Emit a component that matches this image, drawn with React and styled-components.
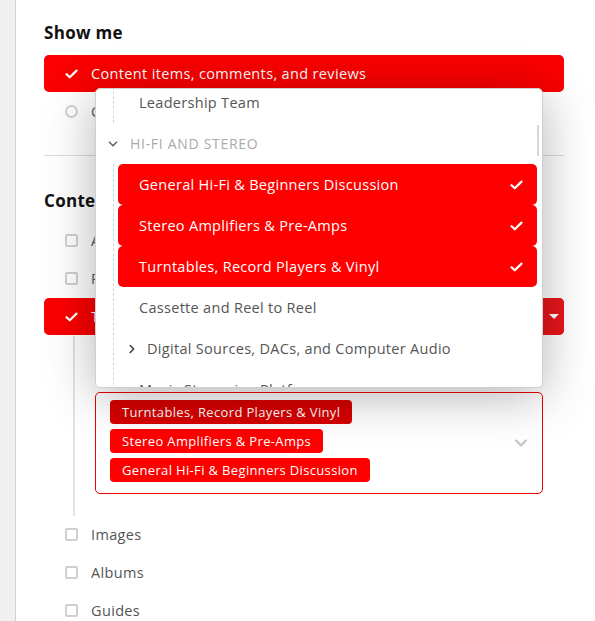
import styled, { createGlobalStyle } from 'styled-components';

const GlobalStyle = createGlobalStyle`
  body {
    margin: 0;
    background: #ffffff;
    font-family: 'Open Sans', 'Liberation Sans', sans-serif;
  }
`;

const Page = styled.div`
  display: flex;
  min-height: 621px;
  overflow: hidden;
`;

const Sidebar = styled.div`
  width: 15px;
  flex-shrink: 0;
  background: #f0f0f0;
  border-right: 1px solid #d2d2d2;
`;

const Main = styled.div`
  flex: 1;
  padding: 22px 31px 0 28px;
`;

const Section = styled.div`
  padding-bottom: ${p => (p.divided ? '24px' : '0')};
  border-bottom: ${p => (p.divided ? '1px solid #dcdcdc' : 'none')};
  margin-bottom: ${p => (p.divided ? '34px' : '0')};
`;

const Heading = styled.h3`
  margin: 0 0 ${p => p.gap || '11px'};
  font-size: 17px;
  font-weight: 700;
  letter-spacing: 0.3px;
  color: #111;
  line-height: 22px;
`;

const Option = styled.div`
  position: relative;
  display: flex;
  align-items: center;
  gap: 13px;
  height: 37px;
  margin-bottom: 1px;
  padding-left: 20px;
  border-radius: 5px;
  font-size: 14.5px;
  letter-spacing: 0.35px;
  color: ${p => (p.selected ? '#fff' : '#555')};
  background: ${p => (p.selected ? '#fa0000' : 'transparent')};
`;

const IconSlot = styled.span`
  width: 14px;
  height: 14px;
  display: flex;
  align-items: center;
  justify-content: center;
  flex-shrink: 0;
`;

const Radio = styled.span`
  width: 9px;
  height: 9px;
  border: 2px solid #d0d0d0;
  border-radius: 50%;
`;

const Box = styled.span`
  width: 9px;
  height: 9px;
  border: 2px solid #d0d0d0;
  border-radius: 2px;
`;

const CaretButton = styled.span`
  position: absolute;
  right: 0;
  top: 0;
  bottom: 0;
  width: 21px;
  display: flex;
  align-items: center;
  justify-content: center;
  background: #e8161c;
  border-radius: 0 5px 5px 0;
`;

const Caret = styled.span`
  width: 0;
  height: 0;
  border-left: 5px solid transparent;
  border-right: 5px solid transparent;
  border-top: 5px solid #fff;
`;

const SubTree = styled.div`
  margin-left: 29px;
  border-left: 2px solid #e2e2e2;
  padding: 56px 21px 22px 20px;
`;

const SelectWrap = styled.div`
  position: relative;
`;

const Select = styled.div`
  position: relative;
  display: flex;
  flex-direction: column;
  align-items: flex-start;
  gap: 5px;
  padding: 7px 14px 11px;
  border: 1px solid #f00000;
  border-radius: 5px;
`;

const Tag = styled.span`
  display: inline-flex;
  align-items: center;
  height: 24px;
  padding: 0 12px;
  border-radius: 4px;
  font-size: 13px;
  letter-spacing: 0.35px;
  color: #fff;
  background: ${p => (p.active ? '#d80000' : '#ff0000')};
`;

const SelectChevron = styled.span`
  position: absolute;
  right: 14px;
  top: 50%;
  transform: translateY(-50%);
  display: flex;
`;

const Dropdown = styled.div`
  position: absolute;
  left: 0;
  right: 0;
  bottom: calc(100% + 4px);
  height: 298px;
  background: #fff;
  border: 1px solid #cfcfcf;
  border-radius: 5px;
  overflow: hidden;
  box-shadow: 0 8px 50px rgba(0, 0, 0, 0.3);
  z-index: 5;
`;

const ScrollThumb = styled.span`
  position: absolute;
  right: 3px;
  top: 36px;
  width: 2px;
  height: 31px;
  background: #d6d6d6;
`;

const List = styled.div`
  margin-top: -7px;
`;

const Children = styled.div`
  margin-left: 17px;
  border-left: 1px dashed #d4d4d4;
  padding: 0 5px 0 4px;
`;

const GroupHead = styled.div`
  display: flex;
  align-items: center;
  gap: 12px;
  height: 41px;
  padding-left: 12px;
  font-size: 14px;
  letter-spacing: 0.7px;
  color: #aaaaaa;
  text-transform: uppercase;
`;

const Item = styled.div`
  display: flex;
  align-items: center;
  justify-content: space-between;
  height: 41px;
  padding: 0 14px 0 ${p => (p.parent ? '9px' : '21px')};
  border-radius: 5px;
  font-size: 14.5px;
  letter-spacing: 0.3px;
  color: ${p => (p.selected ? '#fff' : '#555')};
  background: ${p => (p.selected ? '#ff0000' : 'transparent')};
`;

const ItemLabel = styled.span`
  display: flex;
  align-items: center;
  gap: 10px;
  white-space: nowrap;
`;

const Check = ({ size = 13 }) => (
  <svg width={size} height={Math.round(size * 0.78)} viewBox="0 0 13 10" fill="none">
    <path d="M1.5 5.2 L4.8 8.3 L11.5 1.6" stroke="#fff" strokeWidth="2.2" strokeLinecap="round" strokeLinejoin="round" />
  </svg>
);

const Chevron = ({ dir = 'down', color = '#555', size = 10 }) => (
  <svg width={size} height={size} viewBox="0 0 10 10" fill="none"
    style={{ transform: dir === 'right' ? 'rotate(-90deg)' : 'none' }}>
    <path d="M1.5 3.2 L5 6.7 L8.5 3.2" stroke={color} strokeWidth="1.6" strokeLinecap="round" strokeLinejoin="round" />
  </svg>
);

const hifi = [
  { label: 'General Hi-Fi & Beginners Discussion', selected: true },
  { label: 'Stereo Amplifiers & Pre-Amps', selected: true },
  { label: 'Turntables, Record Players & Vinyl', selected: true },
  { label: 'Cassette and Reel to Reel' },
  { label: 'Digital Sources, DACs, and Computer Audio', parent: true },
  { label: 'Music Streaming Platforms' },
];

export default function App() {
  return (
    <Page>
      <GlobalStyle />
      <Sidebar />
      <Main>
        <Section divided>
          <Heading>Show me</Heading>
          <Option selected>
            <IconSlot><Check /></IconSlot>
            Content items, comments, and reviews
          </Option>
          <Option>
            <IconSlot><Radio /></IconSlot>
            Content items only
          </Option>
        </Section>

        <Section>
          <Heading gap="10px">Content types</Heading>
          <Option>
            <IconSlot><Box /></IconSlot>
            All Content
          </Option>
          <Option>
            <IconSlot><Box /></IconSlot>
            Pages
          </Option>
          <Option selected>
            <IconSlot><Check /></IconSlot>
            Topics
            <CaretButton><Caret /></CaretButton>
          </Option>
          <SubTree>
            <SelectWrap>
              <Dropdown>
                <List>
                  <Children>
                    <Item>Leadership Team</Item>
                  </Children>
                  <GroupHead>
                    <Chevron color="#666" />
                    Hi-Fi and Stereo
                  </GroupHead>
                  <Children>
                    {hifi.map(it => (
                      <Item key={it.label} selected={it.selected} parent={it.parent}>
                        <ItemLabel>
                          {it.parent && <Chevron dir="right" color="#444" />}
                          {it.label}
                        </ItemLabel>
                        {it.selected && <Check />}
                      </Item>
                    ))}
                  </Children>
                </List>
                <ScrollThumb />
              </Dropdown>
              <Select>
                <Tag active>Turntables, Record Players &amp; Vinyl</Tag>
                <Tag>Stereo Amplifiers &amp; Pre-Amps</Tag>
                <Tag>General Hi-Fi &amp; Beginners Discussion</Tag>
                <SelectChevron><Chevron color="#c8c8c8" size={14} /></SelectChevron>
              </Select>
            </SelectWrap>
          </SubTree>
          <Option>
            <IconSlot><Box /></IconSlot>
            Images
          </Option>
          <Option>
            <IconSlot><Box /></IconSlot>
            Albums
          </Option>
          <Option>
            <IconSlot><Box /></IconSlot>
            Guides
          </Option>
        </Section>
      </Main>
    </Page>
  );
}
